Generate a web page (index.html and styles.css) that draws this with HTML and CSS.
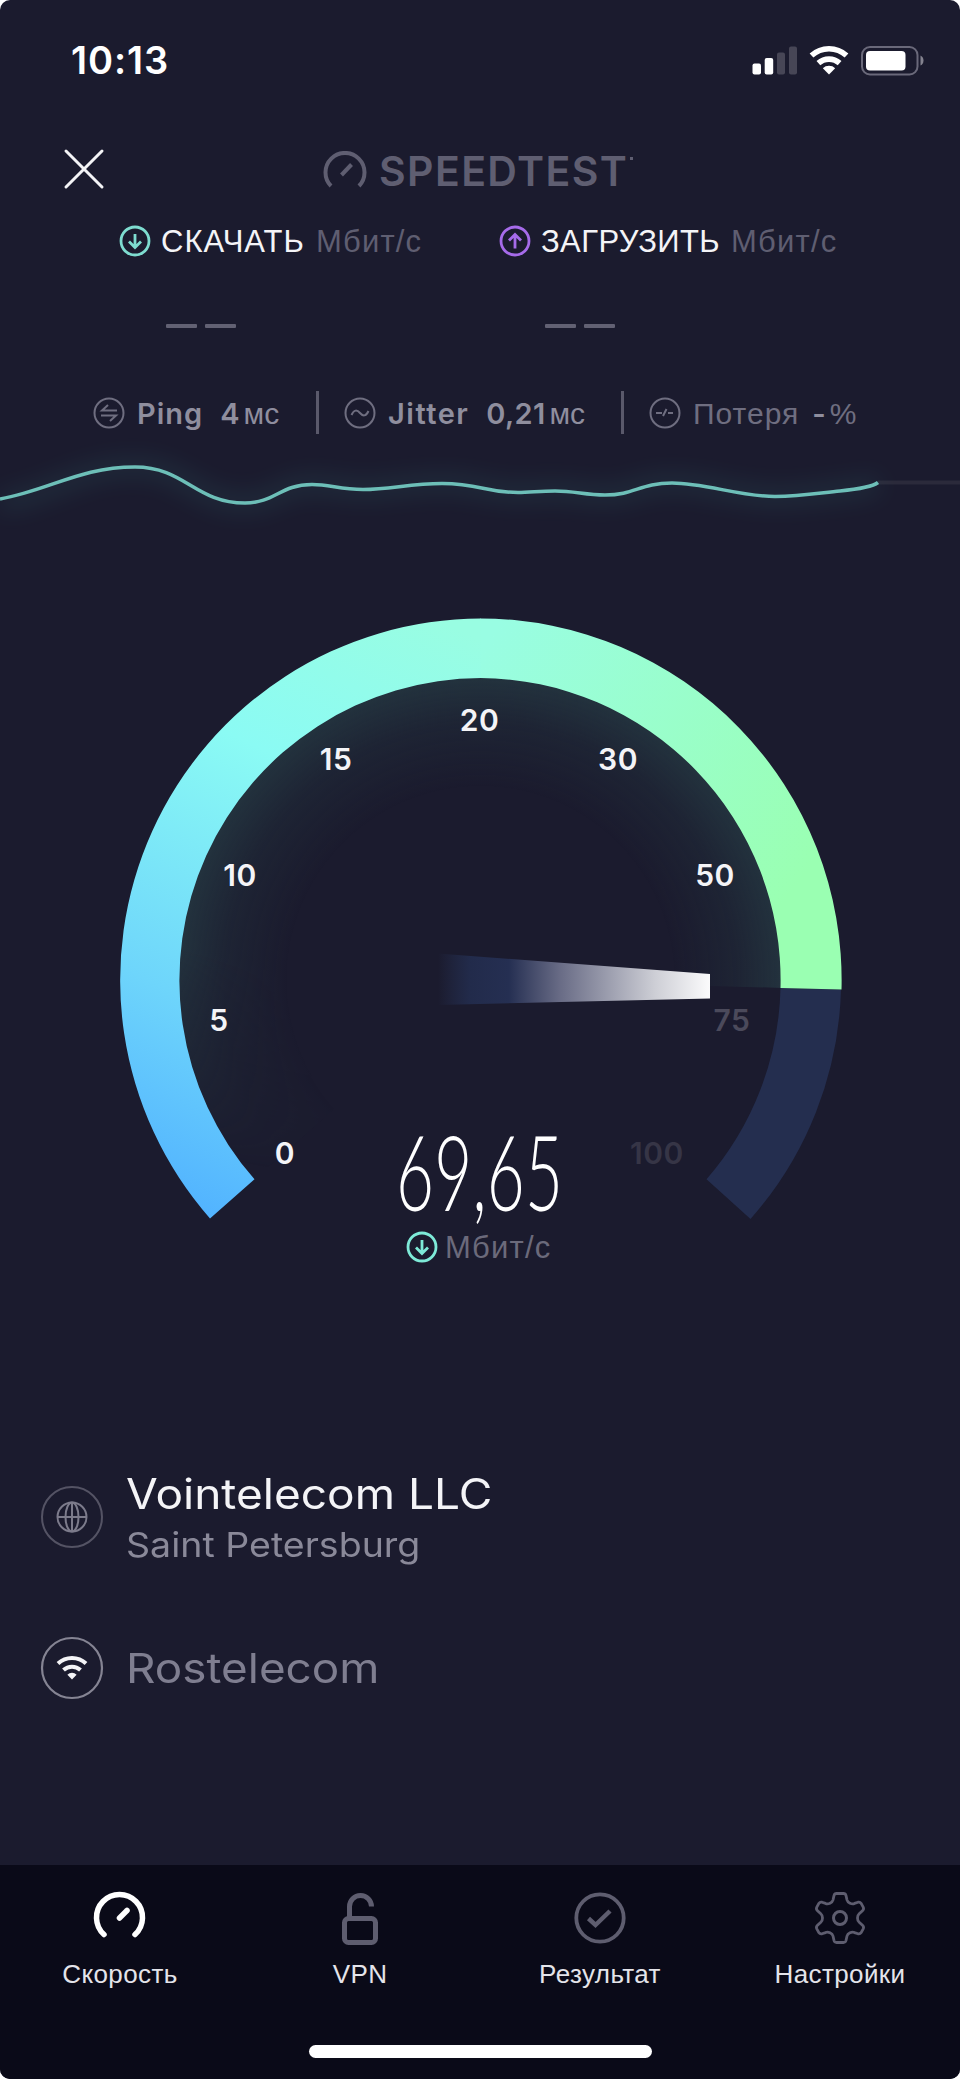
FILE: index.html
```
<!DOCTYPE html>
<html lang="ru">
<head>
    <meta charset="UTF-8">
    <meta name="viewport" content="width=device-width, initial-scale=1.0">
    <title>Speedtest</title>
    <link rel="stylesheet" href="styles.css">
</head>
<body>
    <div class="screen">
        <div class="status-bar">
            <span class="time">10:13</span>
            <svg class="status-icons" width="174" height="32" viewBox="750 43 174 32">
                <g fill="#fff">
                    <rect x="752.5" y="62.5" width="8.5" height="11" rx="2"/>
                    <rect x="764.7" y="57" width="8.5" height="16.5" rx="2"/>
                </g>
                <g fill="#474656">
                    <rect x="777" y="51.5" width="8" height="22" rx="2"/>
                    <rect x="789" y="45.5" width="8" height="28" rx="2"/>
                </g>
                <g fill="none" stroke="#fff" stroke-width="5.6">
                    <path d="M811.5 54.5a26 26 0 0 1 35 0"/>
                    <path d="M818.4 62.2a15.8 15.8 0 0 1 21.2 0"/>
                </g>
                <path d="M829 73.5l-6.2-6.2a9 9 0 0 1 12.4 0z" fill="#fff"/>
                <rect x="862" y="46" width="55.5" height="27.5" rx="8" fill="none" stroke="#6a697a" stroke-width="2"/>
                <rect x="866" y="50" width="39.5" height="19.5" rx="4" fill="#fff"/>
                <path d="M920.5 54.5q3 1.500 3 5t-3 5z" fill="#84838f"/>
            </svg>
        </div>

        <div class="top-bar">
            <svg class="close" width="42" height="42" viewBox="0 0 42 42" fill="none" stroke="#f4f4f6" stroke-width="3" stroke-linecap="round">
                <path d="M3 3l36 36M39 3L3 39"/>
            </svg>
            <div class="logo">
                <svg width="46" height="40" viewBox="0 0 46 40" fill="none" stroke="#5f5e71" stroke-width="4">
                    <path d="M8 35a19.500 19.500 0 1 1 28 0"/>
                    <path d="M18.500 24L28.500 13.500"/>
                </svg>
                <span class="logo-text">SPEEDTEST</span><span class="logo-mark"></span>
            </div>
        </div>

        <div class="results">
            <div class="result download">
                <svg width="32" height="32" viewBox="0 0 32 32" fill="none" stroke="#7edcd0" stroke-width="2.800">
                    <circle cx="16" cy="16" r="14"/>
                    <path d="M16 9v13M10 16.500l6 6 6-6"/>
                </svg>
                <span class="result-name">СКАЧАТЬ</span>
                <span class="unit">Мбит/с</span>
            </div>
            <div class="result upload">
                <svg width="32" height="32" viewBox="0 0 32 32" fill="none" stroke="#a66bea" stroke-width="2.800">
                    <circle cx="16" cy="16" r="14"/>
                    <path d="M16 23.500V10M10 15.500l6-6 6 6"/>
                </svg>
                <span class="result-name">ЗАГРУЗИТЬ</span>
                <span class="unit">Мбит/с</span>
            </div>
        </div>
        <div class="blanks">
            <div class="blank"><i></i><i></i></div>
            <div class="blank"><i></i><i></i></div>
        </div>

        <div class="metrics">
            <div class="metric ping">
                <svg width="32" height="32" viewBox="0 0 32 32" fill="none" stroke="#6f6e80" stroke-width="2">
                    <circle cx="16" cy="16" r="14.500"/>
                    <path d="M24 13.500H9l6-5.500M8 18.500h15l-6 5.500"/>
                </svg>
                <b class="label">Ping</b>
                <b class="value">4</b>
                <span class="ms">мс</span>
            </div>
            <div class="metric jitter">
                <svg width="32" height="32" viewBox="0 0 32 32" fill="none" stroke="#6f6e80" stroke-width="2">
                    <circle cx="16" cy="16" r="14.500"/>
                    <path d="M7.500 18c2.500-5.500 5.500-5.500 8.500-2s6 3.500 8.500-2"/>
                </svg>
                <b class="label">Jitter</b>
                <b class="value">0,21</b>
                <span class="ms">мс</span>
            </div>
            <div class="metric loss">
                <svg width="32" height="32" viewBox="0 0 32 32" fill="none" stroke="#6f6e80" stroke-width="2">
                    <circle cx="16" cy="16" r="14.500"/>
                    <path d="M7 16h6M19 16h5M14 19l3.500-7"/>
                </svg>
                <span class="label">Потеря</span>
                <b class="value">-</b>
                <span class="percent">%</span>
            </div>
        </div>

        <svg class="wave" width="960" height="106" viewBox="0 434 960 106" fill="none">
            <defs>
                <filter id="soft" x="-5%" y="-100%" width="110%" height="300%">
                    <feGaussianBlur stdDeviation="12"/>
                </filter>
            </defs>
            <path d="M878 482.500H960" stroke="#2b2a3b" stroke-width="4"/>
            <path d="M0 503C50 496 80 467 135 467C185 467 195 503 245 503C275 503 280 484.500 312 484.500C330 484.500 340 489.500 363 489.500C390 489.500 410 483.500 442 483.500C480 483.500 485 492.500 518 492.500C530 492.500 540 491 555 491C575 491 585 495 605 495C635 495 640 483 672 483C705 483 740 496.500 775 496.500C800 496.500 820 493 840 491C860 489 872 487 878 482.500" stroke="#4bb5ab" stroke-width="14" opacity=".14" filter="url(#soft)"/>
            <path d="M0 499C50 490 80 467 135 467C185 467 195 503 245 503C275 503 280 484.500 312 484.500C330 484.500 340 489.500 363 489.500C390 489.500 410 483.500 442 483.500C480 483.500 485 492.500 518 492.500C530 492.500 540 491 555 491C575 491 585 495 605 495C635 495 640 483 672 483C705 483 740 496.500 775 496.500C800 496.500 820 493 840 491C860 489 872 487 878 482.500" stroke="#6dbfb8" stroke-width="3.500"/>
        </svg>

        <svg class="gauge" width="960" height="760" viewBox="0 540 960 760">
            <defs>
                <linearGradient id="arcLeft" gradientUnits="userSpaceOnUse" x1="200" y1="1220" x2="480" y2="640">
                    <stop offset="0" stop-color="#51b2ff"/>
                    <stop offset=".3" stop-color="#6ed5fb"/>
                    <stop offset=".7" stop-color="#8bfbf4"/>
                    <stop offset="1" stop-color="#99fde2"/>
                </linearGradient>
                <linearGradient id="arcRight" gradientUnits="userSpaceOnUse" x1="480" y1="650" x2="800" y2="880">
                    <stop offset="0" stop-color="#99fde3"/>
                    <stop offset="1" stop-color="#9affb2"/>
                </linearGradient>
                <radialGradient id="glow" gradientUnits="userSpaceOnUse" cx="480.500" cy="980" r="302">
                    <stop offset=".64" stop-color="#2b4a4e" stop-opacity="0"/>
                    <stop offset=".85" stop-color="#2b4a4e" stop-opacity=".2"/>
                    <stop offset="1" stop-color="#2b4a4e" stop-opacity=".5"/>
                </radialGradient>
                <linearGradient id="fade" gradientUnits="userSpaceOnUse" x1="250" y1="1165" x2="290" y2="970">
                    <stop offset="0" stop-color="#fff" stop-opacity="0"/>
                    <stop offset="1" stop-color="#fff"/>
                </linearGradient>
                <mask id="glowMask" maskUnits="userSpaceOnUse" x="100" y="600" width="760" height="640">
                    <rect x="100" y="600" width="760" height="640" fill="url(#fade)"/>
                </mask>
                <linearGradient id="needle" gradientUnits="userSpaceOnUse" x1="438" y1="0" x2="710" y2="0">
                    <stop offset="0" stop-color="#252f50" stop-opacity="0"/>
                    <stop offset=".12" stop-color="#222b4b"/>
                    <stop offset=".26" stop-color="#252f52"/>
                    <stop offset=".45" stop-color="#696c86"/>
                    <stop offset=".8" stop-color="#cecfd6"/>
                    <stop offset="1" stop-color="#fbfbfc"/>
                </linearGradient>
            </defs>
            <path d="M480.500 980L254.500 1179.300A302 302 0 1 1 782.400 987.900z" fill="url(#glow)" mask="url(#glowMask)"/>
            <path d="M841 989.500A361 361 0 0 1 750.500 1219L706.500 1179.300A302 302 0 0 0 780.500 987.900z" fill="#242e4f"/>
            <path d="M210 1218.500A361.500 361.500 0 0 1 481 618.500V678A302 302 0 0 0 254.500 1179.300z" fill="url(#arcLeft)"/>
            <path d="M480.500 618.500A361.500 361.500 0 0 1 841.500 989.500L780.500 987.900A302 302 0 0 0 480.500 678z" fill="url(#arcRight)"/>
            <path d="M438 953.500L710 974V998.500L438 1005z" fill="url(#needle)"/>
            <g class="ticks">
                <text x="285" y="1164">0</text>
                <text x="219" y="1030.500">5</text>
                <text x="240" y="886">10</text>
                <text x="336" y="770">15</text>
                <text x="479.500" y="731">20</text>
                <text x="618" y="770">30</text>
                <text x="715" y="886">50</text>
                <text x="732" y="1030.500" class="dim">75</text>
                <text x="657" y="1164" class="dimmer">100</text>
            </g>
            <text class="speed" transform="translate(396 1211) scale(.63 1)" textLength="265">69,65</text>
            <g fill="none" stroke="#7eead8" stroke-width="2.800">
                <circle cx="422" cy="1247" r="14"/>
                <path d="M422 1240v13M416 1247.500l6 6 6-6"/>
            </g>
            <text class="speed-unit" x="445" y="1258">Мбит/с</text>
        </svg>

        <div class="servers">
            <div class="server">
                <svg width="64" height="64" viewBox="0 0 64 64" fill="none" stroke="#7c7b8b" stroke-width="2">
                    <circle cx="32" cy="32" r="30" stroke="#545364"/>
                    <circle cx="32" cy="32" r="14.500"/>
                    <ellipse cx="32" cy="32" rx="6.500" ry="14.500"/>
                    <path d="M17.500 32h29M32 17.500v29"/>
                </svg>
                <div class="server-text">
                    <div class="server-name">Vointelecom LLC</div>
                    <div class="server-city">Saint Petersburg</div>
                </div>
            </div>
            <div class="server">
                <svg width="64" height="64" viewBox="0 0 64 64" fill="none" stroke="#f4f4f7" stroke-width="4">
                    <circle cx="32" cy="32" r="30" stroke="#858493" stroke-width="2.200"/>
                    <path d="M18 27.500a20.500 20.500 0 0 1 28 0M23.500 34a12.500 12.500 0 0 1 17 0"/>
                    <path d="M32 43.500l-4.600-4.800a6.500 6.500 0 0 1 9.200 0z" fill="#f4f4f7" stroke="none"/>
                </svg>
                <div class="provider">Rostelecom</div>
            </div>
        </div>

        <div class="tab-bar">
            <div class="tabs">
                <div class="tab">
                    <svg width="54" height="54" viewBox="0 0 54 54" fill="none" stroke="#fff" stroke-width="5.500" stroke-linecap="round">
                        <path d="M11 43.500a23 23 0 1 1 31 0"/>
                        <path d="M26.500 27l7.500-7.500"/>
                    </svg>
                    <span>Скорость</span>
                </div>
                <div class="tab">
                    <svg width="54" height="54" viewBox="0 0 54 54" fill="none" stroke="#5e5d6f" stroke-width="5">
                        <rect x="11.500" y="27.500" width="31" height="24" rx="4"/>
                        <path d="M16.500 28V15.500a11 11 0 0 1 22 0"/>
                    </svg>
                    <span>VPN</span>
                </div>
                <div class="tab">
                    <svg width="54" height="54" viewBox="0 0 54 54" fill="none" stroke="#5e5d6f" stroke-width="3.800">
                        <circle cx="27" cy="27" r="23.700"/>
                        <path d="M15.500 27.500l7 6.500L37 20" stroke-width="4.500"/>
                    </svg>
                    <span>Результат</span>
                </div>
                <div class="tab">
                    <svg width="54" height="54" viewBox="0 0 54 54" fill="none" stroke="#5e5d6f" stroke-width="2.800" stroke-linejoin="round">
                        <path d="M23.500 2.500h7q2 0 2.500 2l1 4.500q.5 2 3 3.200t4.500.2l3.500-1.200q2-.5 3 1l2.200 4q1 2-.7 3.500l-3.300 3q-1.700 1.500-1.700 4.300t1.700 4.300l3.300 3q1.700 1.500.7 3.500l-2.200 4q-1 1.500-3 1l-3.500-1.200q-2-1-4.500.2t-3 3.200l-1 4.500q-.5 2-2.500 2h-7q-2 0-2.500-2l-1-4.500q-.5-2-3-3.200t-4.500-.2L9 42.800q-2 .5-3-1l-2.200-4q-1-2 .7-3.500l3.300-3Q9.500 29.800 9.500 27t-1.700-4.300l-3.300-3q-1.700-1.500-.7-3.500l2.200-4q1-1.500 3-1l3.500 1.200q2 1 4.500-.2t3-3.200l1-4.500q.5-2 2.500-2z"/>
                        <circle cx="27" cy="27" r="6.500" stroke-width="3"/>
                    </svg>
                    <span>Настройки</span>
                </div>
            </div>
            <div class="home-indicator"></div>
        </div>
    </div>
</body>
</html>
```
FILE: styles.css
```
* {
    box-sizing: border-box;
}

body {
    margin: 0;
    background-color: #fff;
    font-family: 'Liberation Sans', Arial, sans-serif;
    color: #f4f4f7;
}

svg {
    display: block;
    flex-shrink: 0;
}

.screen {
    display: flex;
    flex-direction: column;
    width: 960px;
    height: 2079px;
    background-color: #1b1b2e;
    border-radius: 10px;
    overflow: hidden;
}

/* Status bar */
.status-bar {
    display: flex;
    justify-content: space-between;
    align-items: center;
    height: 119px;
    padding: 0 36px 0 71px;
}

.time {
    font-family: Inter, sans-serif;
    font-size: 38px;
    font-weight: 600;
    letter-spacing: 0.9px;
    color: #fff;
}

/* Header */
.top-bar {
    display: grid;
    grid-template-columns: 260px auto;
    align-items: center;
    height: 104px;
    padding-left: 63px;
}

.close {
    margin-bottom: 4px;
}

.logo {
    display: flex;
    align-items: center;
    color: #5f5e71;
}

.logo-text {
    font-family: Inter, sans-serif;
    font-size: 41px;
    font-weight: 600;
    line-height: 50px;
    letter-spacing: 1.4px;
    margin-left: 10px;
}

.logo-mark {
    width: 3px;
    height: 3px;
    margin: -26px 0 0 2px;
    background-color: #5f5e71;
}

/* Download / upload */
.results {
    display: flex;
    height: 36px;
    padding-left: 119px;
}

.result {
    display: flex;
    align-items: center;
    width: 380px;
    font-size: 31px;
    line-height: 34px;
}

.result span {
    padding-top: 2px;
}

.result-name {
    margin-left: 10px;
}

.download .result-name {
    letter-spacing: 1px;
}

.upload .result-name {
    letter-spacing: 0.4px;
}

.unit {
    margin-left: 11px;
    letter-spacing: 1.2px;
    color: #5f5e71;
}

.blanks {
    display: flex;
    height: 132px;
    padding: 65px 0 0 166px;
}

.blank {
    display: flex;
    gap: 8px;
    width: 379px;
}

.blank i {
    width: 31px;
    height: 4px;
    border-radius: 1px;
    background-color: #626173;
}

/* Ping, jitter, packet loss */
.metrics {
    display: flex;
    height: 43px;
    padding-left: 93px;
    color: #8f8e9e;
}

.metric {
    display: flex;
    align-items: center;
    font-size: 30px;
    line-height: 41px;
}

.metric b,
.metric span {
    padding-top: 2px;
}

.metric b {
    font-family: Inter, sans-serif;
    font-size: 29px;
    font-weight: 600;
}

.metric .label {
    margin-left: 12px;
    letter-spacing: 1px;
}

.metric .value {
    margin-left: 17px;
}

.ping {
    width: 226px;
    border-right: 3px solid #5a596b;
}

.jitter {
    width: 305px;
    padding-left: 25px;
    border-right: 3px solid #5a596b;
}

.jitter .label {
    letter-spacing: 1.5px;
}

.jitter .value {
    letter-spacing: 0.3px;
}

.loss {
    padding-left: 25px;
}

.ms {
    margin-left: 4px;
}

.loss .label,
.percent {
    color: #6f6e80;
}

.loss .value {
    margin-left: 13px;
}

.percent {
    margin-left: 4px;
}

/* Gauge */
.ticks {
    font-family: Inter, sans-serif;
    font-size: 30px;
    font-weight: 600;
    text-anchor: middle;
    letter-spacing: 0.5px;
    fill: #f4f4f7;
}

.ticks .dim {
    fill: #4b4a5b;
}

.ticks .dimmer {
    fill: #363546;
}

.speed {
    font-family: Lato, sans-serif;
    font-size: 104px;
    font-weight: 300;
    fill: #fff;
}

.speed-unit {
    font-size: 31px;
    letter-spacing: 1.2px;
    fill: #6b6a7b;
}

/* Servers */
.servers {
    display: flex;
    flex-direction: column;
    gap: 71px;
    height: 565px;
    padding: 169px 0 0 40px;
    font-family: Inter, sans-serif;
}

.server {
    display: flex;
    align-items: center;
    height: 96px;
}

.server:last-child {
    height: 64px;
}

.server-text,
.provider {
    margin-left: 22px;
}

/* the app font runs wider than Inter */
.server-name,
.server-city,
.provider {
    transform-origin: left center;
}

.server-name {
    font-size: 42px;
    line-height: 54px;
    transform: scaleX(1.096);
}

.server-city {
    font-size: 34px;
    line-height: 47px;
    color: #8a8999;
    transform: scaleX(1.104);
}

.provider {
    font-size: 41px;
    color: #7f7e90;
    transform: scaleX(1.118);
}

/* Bottom tabs */
.tab-bar {
    display: flex;
    flex-direction: column;
    justify-content: space-between;
    align-items: center;
    height: 214px;
    padding: 26px 0 21px;
    background-color: #0a0a18;
}

.tabs {
    display: grid;
    grid-template-columns: repeat(4, 240px);
}

.tab {
    display: flex;
    flex-direction: column;
    align-items: center;
    gap: 13px;
    font-size: 26px;
    line-height: 32px;
    letter-spacing: 0.4px;
    color: #e4e4ea;
}

.home-indicator {
    width: 343px;
    height: 13px;
    border-radius: 7px;
    background-color: #fff;
}
```
